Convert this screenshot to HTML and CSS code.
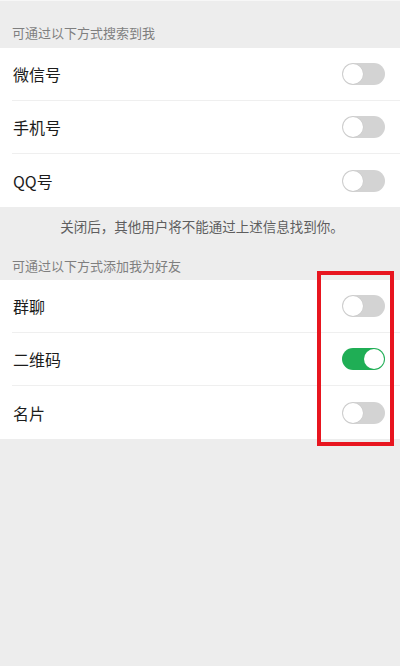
FILE: index.html
```html
<!DOCTYPE html>
<html lang="zh">
<head>
<meta charset="utf-8">
<link rel="stylesheet" href="styles.css">
</head>
<body>
<div class="page">
  <div class="group-title first">可通过以下方式搜索到我</div>
  <div class="list">
    <div class="row"><span class="label">微信号</span><span class="switch"></span></div>
    <div class="row"><span class="label">手机号</span><span class="switch"></span></div>
    <div class="row"><span class="label">QQ号</span><span class="switch"></span></div>
  </div>
  <div class="note">关闭后，其他用户将不能通过上述信息找到你。</div>
  <div class="group-title second">可通过以下方式添加我为好友</div>
  <div class="list">
    <div class="row"><span class="label">群聊</span><span class="switch"></span></div>
    <div class="row"><span class="label">二维码</span><span class="switch on"></span></div>
    <div class="row"><span class="label">名片</span><span class="switch"></span></div>
  </div>
  <div class="highlight"></div>
</div>
</body>
</html>
```

FILE: styles.css
```css
html, body {
  margin: 0;
  padding: 0;
}
body {
  background: #ededed;
  font-family: "Noto Sans CJK SC", "Noto Sans", sans-serif;
}
.page {
  position: relative;
  width: 400px;
  height: 666px;
  background: #ededed;
  border-top: 1px solid #f7f7f7;
  box-sizing: border-box;
}
.group-title {
  font-size: 13px;
  line-height: 18px;
  color: #7f7f7f;
  padding-left: 12px;
}
.group-title.first {
  padding-top: 23px;
  padding-bottom: 6px;
}
.group-title.second {
  padding-top: 22px;
  padding-bottom: 5px;
}
.list {
  background: #ffffff;
}
.row {
  height: 53px;
  display: flex;
  align-items: center;
  justify-content: space-between;
  margin-left: 12px;
  padding-right: 15px;
  box-sizing: border-box;
  border-bottom: 1px solid #efefef;
}
.row:last-child {
  border-bottom: none;
}
.label {
  font-size: 16px;
  color: #1c1c1c;
  padding-left: 1px;
}
.switch {
  position: relative;
  width: 43px;
  height: 22px;
  border-radius: 11px;
  background: #d3d3d3;
  box-sizing: border-box;
}
.switch::after {
  content: "";
  position: absolute;
  left: 1px;
  top: 1px;
  width: 20px;
  height: 20px;
  border-radius: 50%;
  background: #ffffff;
  box-shadow: 0 0 0 0.5px #c8c8c8;
}
.switch.on {
  background: #1fae55;
}
.switch.on::after {
  left: auto;
  right: 1px;
  box-shadow: none;
}
.note {
  text-align: center;
  font-size: 13.5px;
  line-height: 18px;
  color: #5e5e5e;
  padding-top: 10px;
  padding-left: 4px;
}
.highlight {
  position: absolute;
  left: 317px;
  top: 270px;
  width: 77px;
  height: 175px;
  border: 4px solid #e8151f;
  box-sizing: border-box;
}
```
